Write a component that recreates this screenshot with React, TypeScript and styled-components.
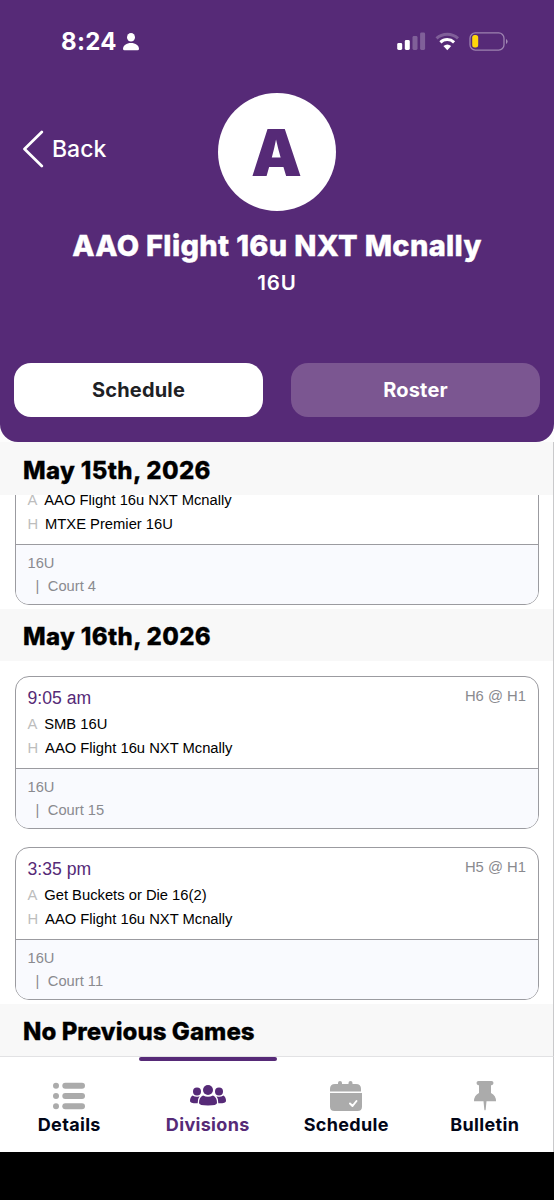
import React from "react";
import styled, { createGlobalStyle } from "styled-components";

const PURPLE = "#562a77";

const GlobalStyle = createGlobalStyle`
  * { box-sizing: border-box; }
  body { margin: 0; background: #000; font-family: Inter, "Liberation Sans", sans-serif; }
`;

const Screen = styled.main`
  width: 554px;
  height: 1200px;
  display: flex;
  flex-direction: column;
  background: #000;
  overflow: hidden;
`;

const HeaderBackdrop = styled.div`
  background: #fcfcfc;
  flex: none;
`;

const Header = styled.header`
  height: 442px;
  background: ${PURPLE};
  border-radius: 0 0 18px 18px;
  color: #fff;
  display: flex;
  flex-direction: column;
`;

const StatusBar = styled.div`
  height: 93px;
  padding: 27px 46px 0 61px;
  display: flex;
  justify-content: space-between;
  align-items: flex-start;
`;

const StatusGroup = styled.div`
  height: 30px;
  display: flex;
  align-items: center;
  gap: 6px;
`;

const Clock = styled.span`
  font-size: 24px;
  font-weight: 700;
  letter-spacing: 0.3px;
  line-height: 30px;
`;

const TeamRow = styled.div`
  display: grid;
  grid-template-columns: 1fr 118px 1fr;
  align-items: center;
`;

const BackButton = styled.button`
  all: unset;
  display: flex;
  align-items: center;
  gap: 8px;
  margin: -6px 0 0 23px;
  font-size: 23px;
  font-weight: 500;
  line-height: 38px;
`;

const Avatar = styled.div`
  height: 118px;
  border-radius: 50%;
  background: #fff;
  color: ${PURPLE};
  display: flex;
  align-items: center;
  justify-content: center;
  font-size: 64px;
  font-weight: 900;
  padding-right: 1px;
`;

const TeamName = styled.h1`
  margin: 15px 0 0;
  line-height: 40px;
  font-size: 29px;
  font-weight: 800;
  letter-spacing: 0.33px;
  text-align: center;
  white-space: nowrap;
  -webkit-text-stroke: 0.4px currentColor;
`;

const Division = styled.div`
  margin-top: 4px;
  line-height: 26px;
  font-size: 20.5px;
  font-weight: 600;
  letter-spacing: 0.9px;
  text-align: center;
`;

const Tabs = styled.div`
  margin-top: 67px;
  padding: 0 14px;
  display: grid;
  grid-template-columns: 1fr 1fr;
  gap: 28px;
`;

const Tab = styled.button<{ $active?: boolean }>`
  border: 0;
  padding: 0;
  height: 53.5px;
  border-radius: 17px;
  background: ${(p) => (p.$active ? "#fff" : "#7b5691")};
  color: ${(p) => (p.$active ? "#1e2125" : "#fff")};
  font: 700 20px Inter, sans-serif;
  letter-spacing: 0.2px;
`;

const Games = styled.section`
  height: 614px;
  flex: none;
  background: #fff;
  border-right: 1px solid #c9c9cb;
  overflow: hidden;
`;

const SectionTitle = styled.h2<{ $height: number; $tracking?: number }>`
  margin: 0;
  height: ${(p) => p.$height}px;
  padding: 3px 0 0 23px;
  display: flex;
  align-items: center;
  background: #f8f8f8;
  color: #000;
  font-size: 24px;
  font-weight: 800;
  letter-spacing: ${(p) => p.$tracking ?? 0.35}px;
  white-space: nowrap;
  -webkit-text-stroke: 0.3px currentColor;
`;

const CardList = styled.div<{ $height: number }>`
  height: ${(p) => p.$height}px;
  padding: 0 14px 4px 15px;
  display: flex;
  flex-direction: column;
  justify-content: flex-end;
  gap: 18px;
  overflow: hidden;
  font-family: "Liberation Sans", Arial, sans-serif;
`;

const Card = styled.article`
  flex: none;
  height: 153px;
  border: 1px solid #9b9ba0;
  border-radius: 14px;
  overflow: hidden;
  display: flex;
  flex-direction: column;
`;

const Matchup = styled.div`
  flex: 1;
  padding: 9px 12px 0 11.5px;
`;

const CardTop = styled.div`
  display: flex;
  justify-content: space-between;
  height: 25px;
  line-height: 24px;
`;

const Time = styled.span`
  color: ${PURPLE};
  font-size: 17.6px;
`;

const Pool = styled.span`
  color: #8a8a8f;
  font-size: 14.8px;
  line-height: 20px;
`;

const TeamLine = styled.div`
  height: 24px;
  line-height: 26px;
  display: flex;
  gap: 6.9px;
  font-size: 14.75px;
  color: #000;
`;

const Side = styled.span`
  color: #bdbdbd;
`;

const Venue = styled.div`
  height: 60px;
  border-top: 1px solid #9b9ba0;
  background: #f9fafe;
  color: #8a8a8f;
  padding: 7px 12px 0 11.5px;
  font-size: 14.7px;
  line-height: 23px;
`;

const Court = styled.div`
  padding-left: 8px;
  display: flex;
  gap: 8.5px;
`;

const BottomNav = styled.nav`
  height: 96px;
  flex: none;
  background: #fff;
  border-top: 1px solid #e2e2e4;
  border-right: 1px solid #c9c9cb;
  display: grid;
  grid-template-columns: repeat(4, 138.5px);
`;

const NavItem = styled.a<{ $active?: boolean }>`
  display: flex;
  flex-direction: column;
  align-items: center;
  color: ${(p) => (p.$active ? PURPLE : "#020617")};
  font-size: 18px;
  font-weight: 700;
  letter-spacing: 0.33px;
  line-height: 24px;

  &::before {
    content: "";
    width: 100%;
    height: 4px;
    border-radius: 2px;
    margin-bottom: 19px;
    background: ${(p) => (p.$active ? PURPLE : "transparent")};
  }
  svg { display: block; margin-bottom: 1px; }
`;

const PersonIcon = () => (
  <svg width="16" height="18" viewBox="0 0 16 18" fill="#fff">
    <ellipse cx="8" cy="4.3" rx="4" ry="4.3" />
    <path d="M8 10C3.5 10 0 12.7 0 15.8Q0 17.3 1.5 17.3H14.5Q16 17.3 16 15.8C16 12.7 12.500 10 8 10Z" />
  </svg>
);

const StatusIcons = () => (
  <svg width="111" height="20" viewBox="0 0 111 20">
    <g fill="#fff">
      <rect x="0.200" y="11" width="5" height="7" rx="1.400" />
      <rect x="7.800" y="8" width="5" height="10" rx="1.400" />
      <g opacity="0.25">
        <rect x="15.500" y="4" width="5" height="14" rx="1.400" />
        <rect x="23.100" y="0.500" width="5" height="17.500" rx="1.400" />
      </g>
    </g>
    <g fill="none" stroke="#fff" strokeWidth="3">
      <path d="M39.500 6.300A16 16 0 0 1 61 6.300" opacity="0.25" />
      <path d="M43.400 10.300A10 10 0 0 1 57.100 10.300" />
    </g>
    <path d="M46.400 14Q50.300 11 54.200 14L50.300 18.200Z" fill="#fff" />
    <rect x="73" y="0.900" width="34" height="17.200" rx="5.300" fill="none" stroke="#fff" strokeOpacity="0.42" strokeWidth="1.300" />
    <path d="M109 7V12Q110.600 11.200 110.600 9.500T109 7Z" fill="#fff" opacity="0.45" />
    <rect x="75.200" y="3" width="6" height="12.500" rx="2.500" fill="#ffd60a" />
  </svg>
);

const ListIcon = () => (
  <svg width="36" height="32" viewBox="0 0 36 32" fill="#ababab">
    {[2.700, 13, 23.300].map((y) => (
      <g key={y}>
        <circle cx="5" cy={y + 3} r="3" />
        <rect x="11.300" y={y} width="22.700" height="6" rx="3" />
      </g>
    ))}
  </svg>
);

const PeopleIcon = () => (
  <svg width="36" height="32" viewBox="0 0 36 32" fill={PURPLE}>
    <circle cx="18" cy="10" r="5" />
    <circle cx="7" cy="11.500" r="4" />
    <circle cx="29" cy="11.500" r="4" />
    <path d="M13 15.500Q18 18 23 15.500C26 17 27 19.500 27 23Q27 25.500 18 25.500T9 23C9 19.500 10 17 13 15.500Z" />
    <path d="M2.500 15.500Q6 17.500 9.500 16.200Q7.300 19 7.700 23.300Q0 23.500 0 21Q0 17 2.500 15.500Z" />
    <path d="M33.500 15.500Q30 17.500 26.500 16.200Q28.700 19 28.300 23.300Q36 23.500 36 21Q36 17 33.500 15.500Z" />
  </svg>
);

const CalendarIcon = () => (
  <svg width="34" height="32" viewBox="0 0 34 32">
    <g fill="#ababab">
      <rect x="9" y="1" width="4" height="8" rx="2" />
      <rect x="19.500" y="1" width="4" height="8" rx="2" />
      <path d="M1 11.500V9Q1 4 6 4H27Q32 4 32 9V11.500Z" />
      <path d="M1 13H33V26.500Q33 31 28.500 31H5.500Q1 31 1 26.500Z" />
    </g>
    <path d="M21 23.500L23.500 26L27.500 21" fill="none" stroke="#fff" strokeWidth="2" strokeLinecap="round" strokeLinejoin="round" />
  </svg>
);

const PinIcon = () => (
  <svg width="22" height="32" viewBox="0 0 22 32" fill="#ababab">
    <path d="M4.500 1H17.500Q19.500 1 19.500 3T17.500 5.200H17V13Q22 15.500 22 21.200H12.500L11.700 29.500Q11 31.500 10.300 29.500L9.500 21.200H0Q0 15.500 5 13V5.200H4.500Q2.500 5 2.500 3T4.500 1Z" />
  </svg>
);

interface Game {
  time?: string;
  pool?: string;
  away: string;
  home: string;
  court: string;
}

const GameCard = ({ game }: { game: Game }) => (
  <Card>
    <Matchup>
      <CardTop>
        {game.time && <Time>{game.time}</Time>}
        {game.pool && <Pool>{game.pool}</Pool>}
      </CardTop>
      <TeamLine><Side>A</Side>{game.away}</TeamLine>
      <TeamLine><Side>H</Side>{game.home}</TeamLine>
    </Matchup>
    <Venue>
      <div>16U</div>
      <Court><span>|</span><span>{game.court}</span></Court>
    </Venue>
  </Card>
);

const TEAM = "AAO Flight 16u NXT Mcnally";

const friday: Game[] = [
  { away: TEAM, home: "MTXE Premier 16U", court: "Court 4" },
];
const saturday: Game[] = [
  { time: "9:05 am", pool: "H6 @ H1", away: "SMB 16U", home: TEAM, court: "Court 15" },
  { time: "3:35 pm", pool: "H5 @ H1", away: "Get Buckets or Die 16(2)", home: TEAM, court: "Court 11" },
];

export default function App() {
  return (
    <Screen>
      <GlobalStyle />
      <HeaderBackdrop>
        <Header>
          <StatusBar>
            <StatusGroup><Clock>8:24</Clock><PersonIcon /></StatusGroup>
            <StatusGroup><StatusIcons /></StatusGroup>
          </StatusBar>
          <TeamRow>
            <BackButton>
              <svg width="21" height="38" viewBox="0 0 21 38" fill="none" stroke="#fff" strokeWidth="2.700" strokeLinecap="round" strokeLinejoin="round">
                <path d="M18.800 2L1.500 19L18.800 36" />
              </svg>
              Back
            </BackButton>
            <Avatar>A</Avatar>
          </TeamRow>
          <TeamName>{TEAM}</TeamName>
          <Division>16U</Division>
          <Tabs>
            <Tab $active>Schedule</Tab>
            <Tab>Roster</Tab>
          </Tabs>
        </Header>
      </HeaderBackdrop>
      <Games>
        <SectionTitle $height={53}>May 15th, 2026</SectionTitle>
        <CardList $height={114}>{friday.map((g) => <GameCard key={g.court} game={g} />)}</CardList>
        <SectionTitle $height={52}>May 16th, 2026</SectionTitle>
        <CardList $height={343}>{saturday.map((g) => <GameCard key={g.court} game={g} />)}</CardList>
        <SectionTitle $height={52} $tracking={0.05}>No Previous Games</SectionTitle>
      </Games>
      <BottomNav>
        <NavItem><ListIcon />Details</NavItem>
        <NavItem $active><PeopleIcon />Divisions</NavItem>
        <NavItem><CalendarIcon />Schedule</NavItem>
        <NavItem><PinIcon />Bulletin</NavItem>
      </BottomNav>
    </Screen>
  );
}
